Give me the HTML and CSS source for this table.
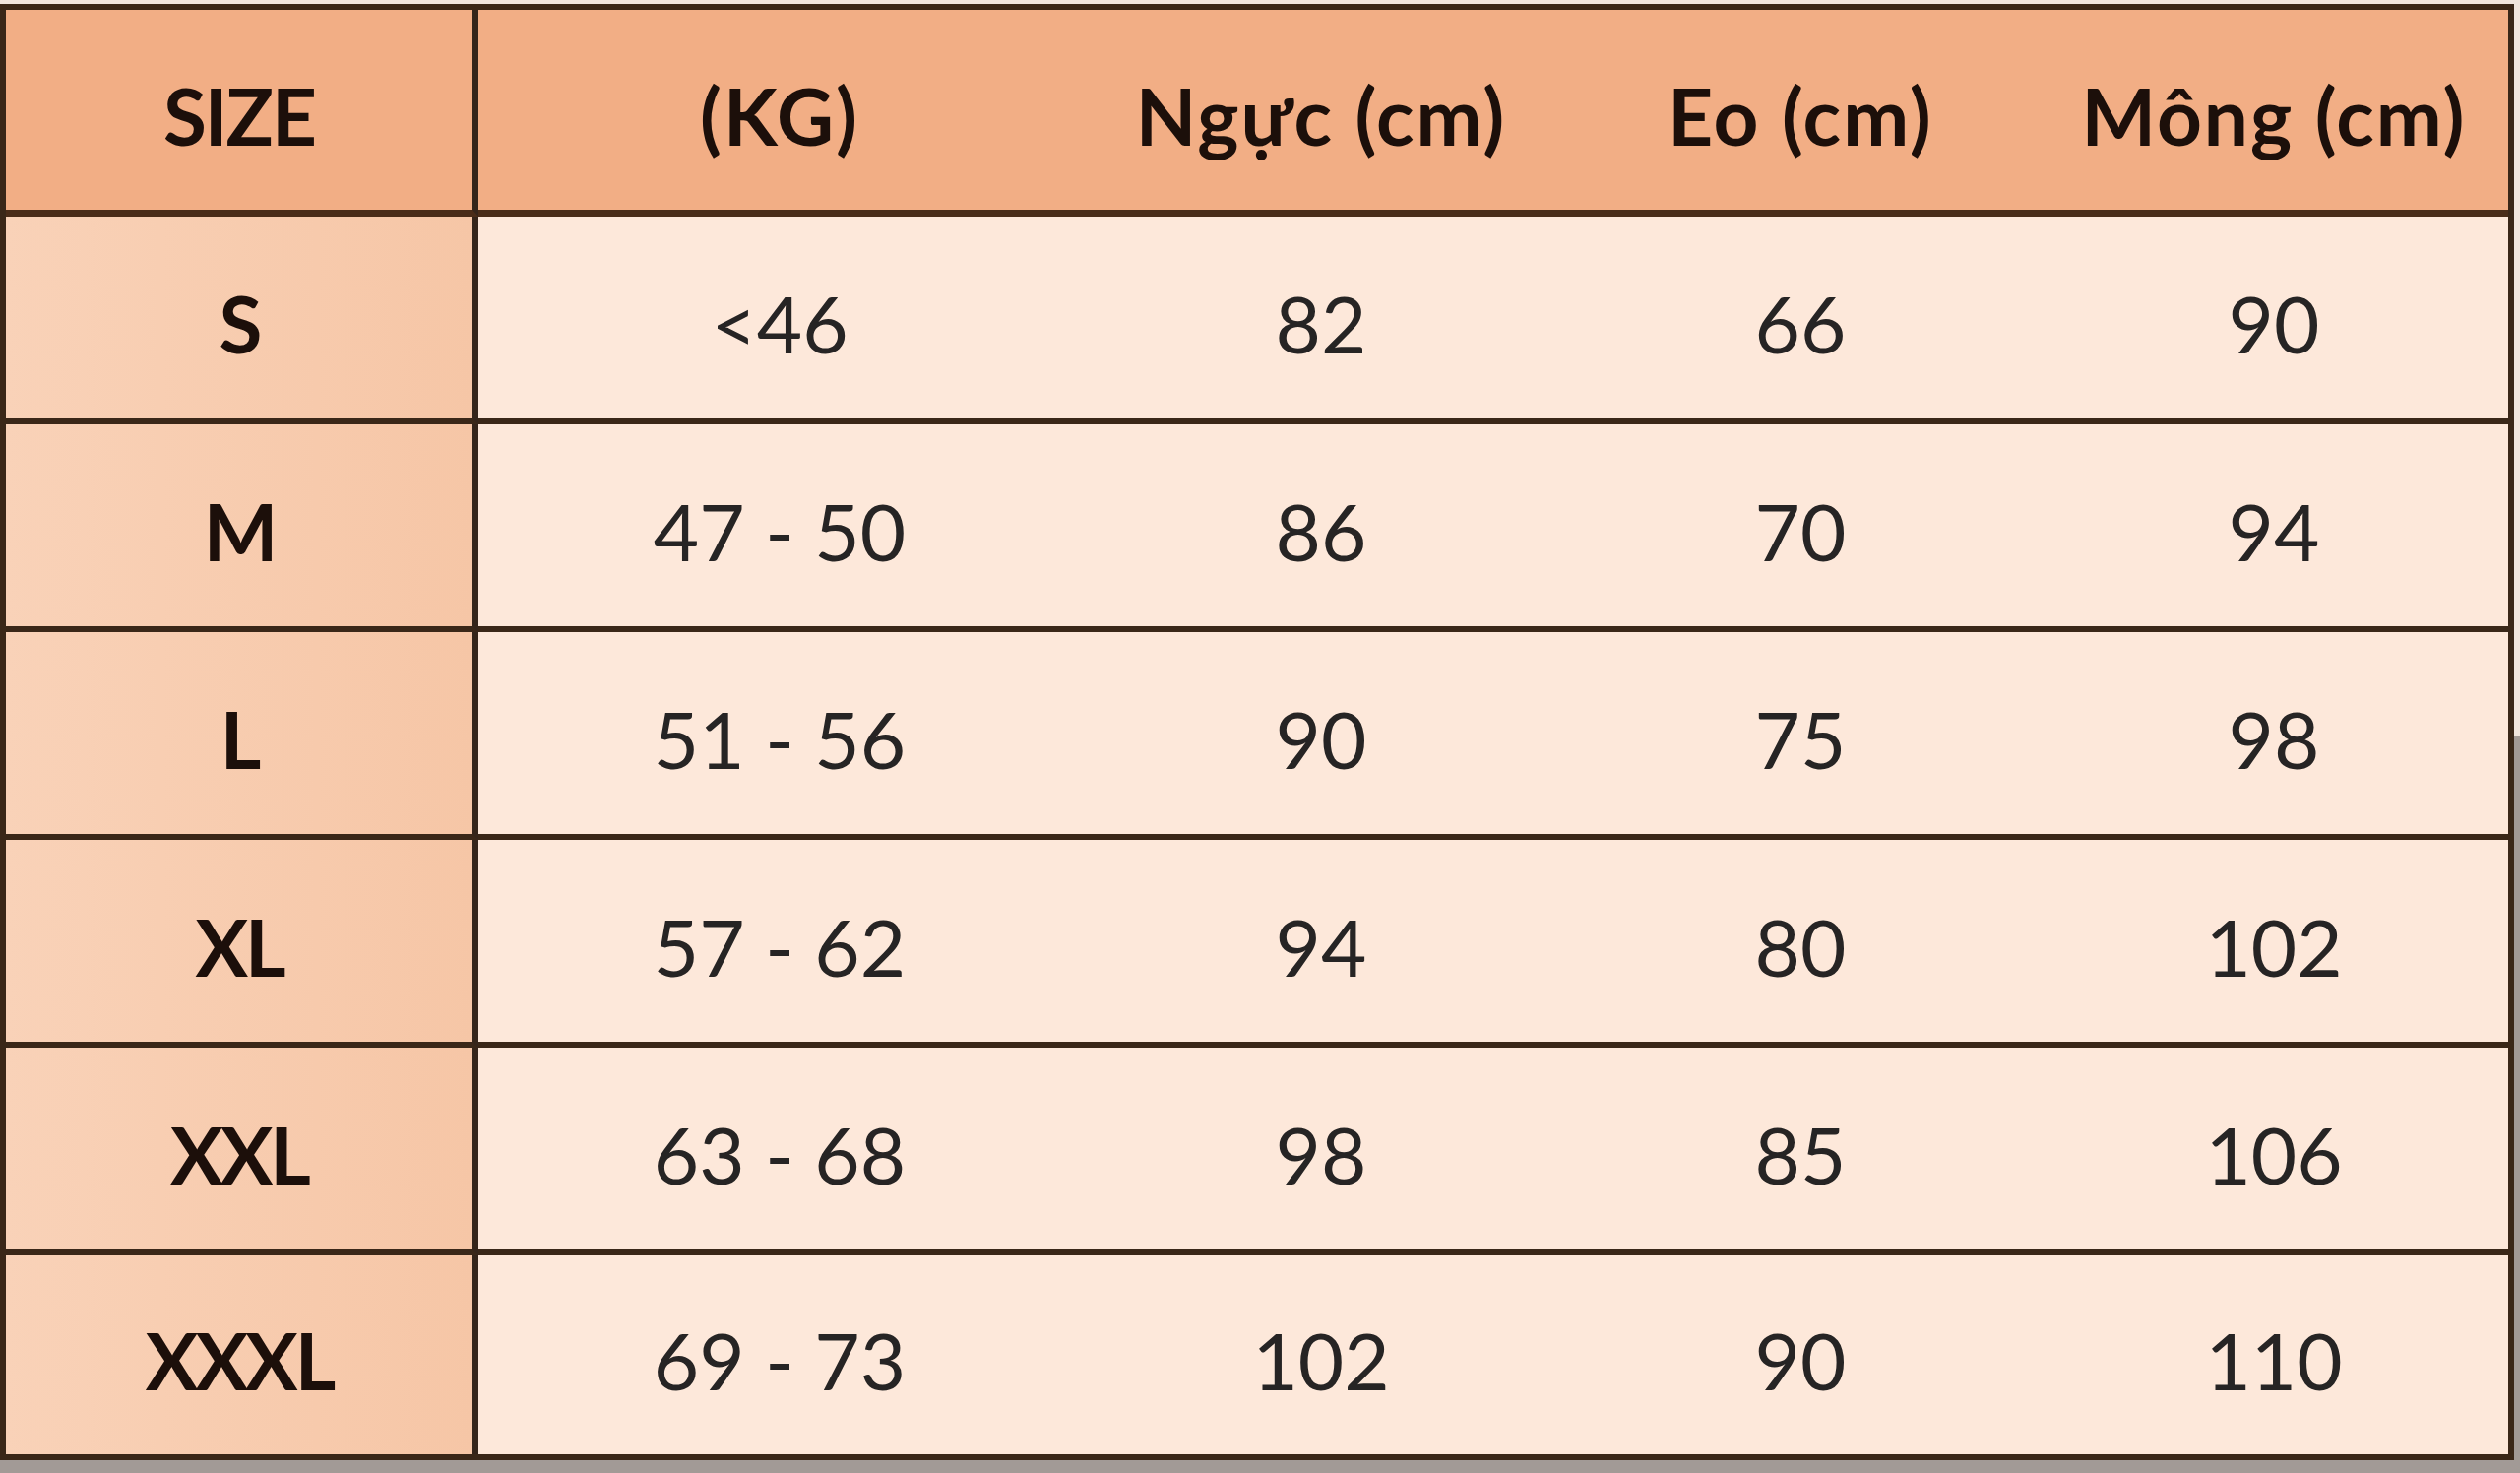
FILE: index.html
```html
<!DOCTYPE html>
<html lang="vi">
<head>
<meta charset="utf-8">
<title>Bảng size</title>
<link rel="stylesheet" href="styles.css">
</head>
<body>
<div class="chart">
  <div class="cell head first">SIZE</div>
  <div class="cell head">(KG)</div>
  <div class="cell head">Ngực (cm)</div>
  <div class="cell head">Eo (cm)</div>
  <div class="cell head">Mông (cm)</div>

  <div class="cell size first">S</div>
  <div class="cell">&lt;46</div>
  <div class="cell">82</div>
  <div class="cell">66</div>
  <div class="cell">90</div>

  <div class="cell size first">M</div>
  <div class="cell">47 - 50</div>
  <div class="cell">86</div>
  <div class="cell">70</div>
  <div class="cell">94</div>

  <div class="cell size first">L</div>
  <div class="cell">51 - 56</div>
  <div class="cell">90</div>
  <div class="cell">75</div>
  <div class="cell">98</div>

  <div class="cell size first">XL</div>
  <div class="cell">57 - 62</div>
  <div class="cell">94</div>
  <div class="cell">80</div>
  <div class="cell">102</div>

  <div class="cell size first">XXL</div>
  <div class="cell">63 - 68</div>
  <div class="cell">98</div>
  <div class="cell">85</div>
  <div class="cell">106</div>

  <div class="cell size first last">XXXL</div>
  <div class="cell last">69 - 73</div>
  <div class="cell last">102</div>
  <div class="cell last">90</div>
  <div class="cell last">110</div>
</div>
</body>
</html>
```

FILE: styles.css
```css
* {
  box-sizing: border-box;
}

html, body {
  margin: 0;
  padding: 0;
}

body {
  width: 2560px;
  height: 1496px;
  padding-top: 4px;
  background: linear-gradient(to bottom, #f1e6de 0, #f1e6de 50%, #a29a96 50%, #a29a96 100%);
  font-family: Lato, "Open Sans", "Noto Sans", sans-serif;
  overflow: hidden;
}

.chart {
  width: 2554px;
  display: grid;
  grid-template-columns: 480px 612px 488px 486px 1fr;
  grid-template-rows: 210px repeat(5, 211px) 202px;
  border: 6px solid #3a2718;
  background: #fde8db;
}

.cell {
  display: flex;
  align-items: center;
  justify-content: center;
  padding-top: 10px;
  font-size: 80px;
  font-weight: 400;
  color: #262424;
  border-bottom: 6px solid #3a2718;
  background: #fde8da;
}

.cell.last {
  border-bottom: none;
}

.cell.first {
  border-right: 6px solid #35251a;
}

.cell.head {
  font-weight: 700;
  color: #1c0f0a;
  letter-spacing: 2px;
  background: #f2ae85;
  border-bottom: 7px solid #4a2c18;
}

.cell.head.first {
  letter-spacing: -2px;
}

.cell.size {
  font-weight: 700;
  color: #1c0f0a;
  letter-spacing: -3px;
  background: linear-gradient(to right, #f9d2b8, #f6c6a6);
}
```
